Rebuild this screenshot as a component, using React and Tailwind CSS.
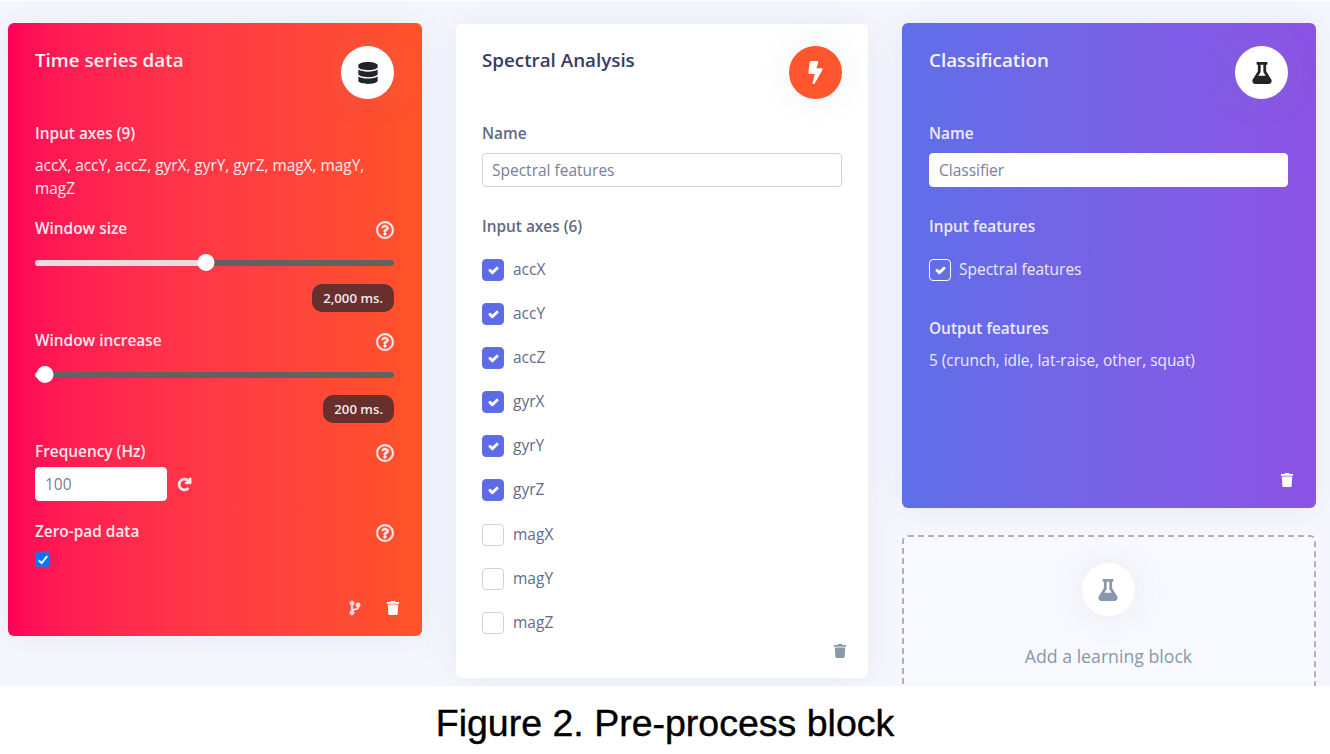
import React from "react";
import {
  FaBolt,
  FaCheck,
  FaCodeBranch,
  FaDatabase,
  FaFlask,
  FaRedo,
  FaRegQuestionCircle,
  FaTrash,
} from "react-icons/fa";

function CardHeader({ title, titleClass, circleClass, children }) {
  return (
    <div className="flex h-[53px] items-start justify-between">
      <h2 className={`mt-[1px] text-[18.8px] leading-[27px] font-semibold ${titleClass}`}>{title}</h2>
      <div
        className={`flex size-[53px] items-center justify-center rounded-full shadow-[0_0_32px_rgba(136,152,170,0.15)] ${circleClass}`}
      >
        {children}
      </div>
    </div>
  );
}

function Label({ children, help, className = "" }) {
  return (
    <div className={`flex h-6 items-center justify-between text-[15.4px] font-semibold ${className}`}>
      <span className="mt-[2px]">{children}</span>
      {help && <FaRegQuestionCircle strokeWidth={14} className="mt-[3px] size-[18px] overflow-visible" />}
    </div>
  );
}

function Slider({ percent, className = "" }) {
  return (
    <div className={`relative flex h-[17px] items-center ${className}`}>
      <div className="h-[6px] w-full overflow-hidden rounded-full bg-[#626262]">
        <div className="h-full bg-[#e9dcdf]" style={{ width: `${percent}%` }} />
      </div>
      <div
        className="absolute top-0 size-[17px] -translate-x-1/2 rounded-full bg-white"
        style={{ left: `${percent}%` }}
      />
    </div>
  );
}

function Badge({ children, className = "" }) {
  return (
    <div className={`flex justify-end ${className}`}>
      <span className="flex h-7 items-center rounded-[10px] bg-[#67302e] px-[11px] pt-[1px] text-[13.2px] font-semibold text-[#f3e9e9]">
        {children}
      </span>
    </div>
  );
}

function TextField({ value, className = "" }) {
  return (
    <div
      className={`flex h-[34px] items-center rounded-[4px] border bg-white px-[9px] pt-[2px] text-[15.5px] text-[#75809e] ${className}`}
    >
      {value}
    </div>
  );
}

function AxisRow({ name, checked }) {
  return (
    <div className="flex h-[44.1px] items-start">
      <span
        className={`flex size-[22px] items-center justify-center rounded-[4px] border ${
          checked ? "border-[#5e72e4] bg-[#5e6be6]" : "border-[#cdd2da] bg-white"
        }`}
      >
        {checked && <FaCheck strokeWidth={60} className="size-[9px] overflow-visible text-white" />}
      </span>
      <span className="ml-[9px] -mt-[1px] text-[15.5px] leading-[22px]">{name}</span>
    </div>
  );
}

const axes = [
  ["accX", true],
  ["accY", true],
  ["accZ", true],
  ["gyrX", true],
  ["gyrY", true],
  ["gyrZ", true],
  ["magX", false],
  ["magY", false],
  ["magZ", false],
];

const cardShadow = "shadow-[0_0_32px_rgba(136,152,170,0.15)]";

function TimeSeriesCard() {
  return (
    <section
      className={`flex h-[613px] w-[414px] flex-col rounded-[6px] bg-linear-to-r from-[#ff0057] to-[#ff5327] pt-[23px] pr-7 pl-[27px] text-[#ffe9ee] ${cardShadow}`}
    >
      <CardHeader title="Time series data" titleClass="text-[#fff0f3]" circleClass="bg-white text-[#212529]">
        <FaDatabase className="size-[22px]" />
      </CardHeader>
      <Label className="mt-[22px]">Input axes (9)</Label>
      <p className="mt-[9px] text-[15.4px] leading-[23px]">
        accX, accY, accZ, gyrX, gyrY, gyrZ, magX, magY,
        <br />
        magZ
      </p>
      <Label help className="mt-4">Window size</Label>
      <Slider percent={47.5} className="mt-[14px]" />
      <Badge className="mt-[13px]">2,000 ms.</Badge>
      <Label help className="mt-4">Window increase</Label>
      <Slider percent={2.9} className="mt-[14px]" />
      <Badge className="mt-[12px]">200 ms.</Badge>
      <Label help className="mt-4">Frequency (Hz)</Label>
      <div className="mt-[4px] flex items-center">
        <TextField value="100" className="w-[132px] border-white" />
        <FaRedo strokeWidth={36} className="ml-[11px] size-[13px] overflow-visible" />
      </div>
      <Label help className="mt-[18px]">Zero-pad data</Label>
      <span className="mt-[9px] flex size-[15px] items-center justify-center rounded-[2px] border border-[#4d65c9] bg-[#0075ff]">
        <svg viewBox="0 0 12 12" className="size-[12px]" fill="none" stroke="white" strokeWidth="2">
          <path d="M1.8 6.4 4.6 9.1 10.2 2.2" />
        </svg>
      </span>
      <div className="mt-[34px] -mr-[6px] flex justify-end gap-[24px]">
        <FaCodeBranch strokeWidth={20} className="size-[14px] overflow-visible" />
        <FaTrash className="size-[14px] text-white" />
      </div>
    </section>
  );
}

function SpectralCard() {
  return (
    <section
      className={`mt-[1px] flex h-[654px] w-[412px] flex-col rounded-[5px] bg-white pt-[22px] pr-[26px] pl-[26px] text-[#626c8c] ${cardShadow}`}
    >
      <CardHeader title="Spectral Analysis" titleClass="text-[#3a3a62]" circleClass="bg-[#ff5630] text-white">
        <FaBolt className="size-[23px]" />
      </CardHeader>
      <Label className="mt-[22px] text-[#5f6a88]">Name</Label>
      <TextField value="Spectral features" className="mt-[8px] border-[#cfd4da]" />
      <Label className="mt-[27px] text-[#5f6a88]">Input axes (6)</Label>
      <div className="mt-[21px] flex flex-col">
        {axes.map(([name, checked]) => (
          <AxisRow key={name} name={name} checked={checked} />
        ))}
      </div>
      <div className="-mt-[12px] -mr-[5px] flex justify-end">
        <FaTrash className="size-[14px] text-[#8898aa]" />
      </div>
    </section>
  );
}

function ClassificationCard() {
  return (
    <section
      className={`flex h-[485px] w-[414px] flex-col rounded-[6px] bg-linear-to-r from-[#5e6fe8] to-[#8b52e4] pt-[23px] pr-7 pl-[27px] text-[#eeeafe] ${cardShadow}`}
    >
      <CardHeader title="Classification" titleClass="text-[#f6f4ff]" circleClass="bg-white text-[#212529]">
        <FaFlask className="size-[22px]" />
      </CardHeader>
      <Label className="mt-[22px]">Name</Label>
      <TextField value="Classifier" className="mt-[8px] border-white" />
      <Label className="mt-[27px]">Input features</Label>
      <div className="mt-[21px] flex h-[22px]">
        <span className="flex size-[22px] items-center justify-center rounded-[4px] border border-white">
          <FaCheck strokeWidth={60} className="size-[9px] overflow-visible text-white" />
        </span>
        <span className="ml-[8px] -mt-[1px] text-[15.5px] leading-[22px]">Spectral features</span>
      </div>
      <Label className="mt-[35px]">Output features</Label>
      <p className="mt-[9px] text-[15.4px] leading-[23px]">5 (crunch, idle, lat-raise, other, squat)</p>
      <div className="mt-[101px] -mr-[6px] flex justify-end">
        <FaTrash className="size-[14px] text-white" />
      </div>
    </section>
  );
}

function AddBlock() {
  return (
    <section className="mt-[27px] flex h-[200px] w-[414px] flex-col items-center rounded-[6px] border-2 border-dashed border-[#adb2ba] bg-[#f8f9fe] pt-[26px] text-[#8898aa]">
      <div className="mr-[2px] flex size-[53px] items-center justify-center rounded-full bg-white shadow-[0_0_32px_rgba(136,152,170,0.15)]">
        <FaFlask className="size-[22px]" />
      </div>
      <p className="mt-[27px] mr-[1px] text-[17.7px] leading-[27px]">Add a learning block</p>
    </section>
  );
}

export default function App() {
  return (
    <div className="h-[754px] w-[1330px] overflow-hidden bg-white font-['Open_Sans','Noto_Sans',sans-serif]">
      <main className="mt-[1px] flex h-[685px] items-start gap-[34px] overflow-hidden bg-[#f6f7fe] pt-[22px] pl-2">
        <TimeSeriesCard />
        <SpectralCard />
        <div className="flex flex-col">
          <ClassificationCard />
          <AddBlock />
        </div>
      </main>
      <p className="mt-[16px] text-center font-['Liberation_Sans',sans-serif] text-[37.5px] leading-[42px] text-black [-webkit-text-stroke:0.4px_black]">
        Figure 2. Pre-process block
      </p>
    </div>
  );
}
